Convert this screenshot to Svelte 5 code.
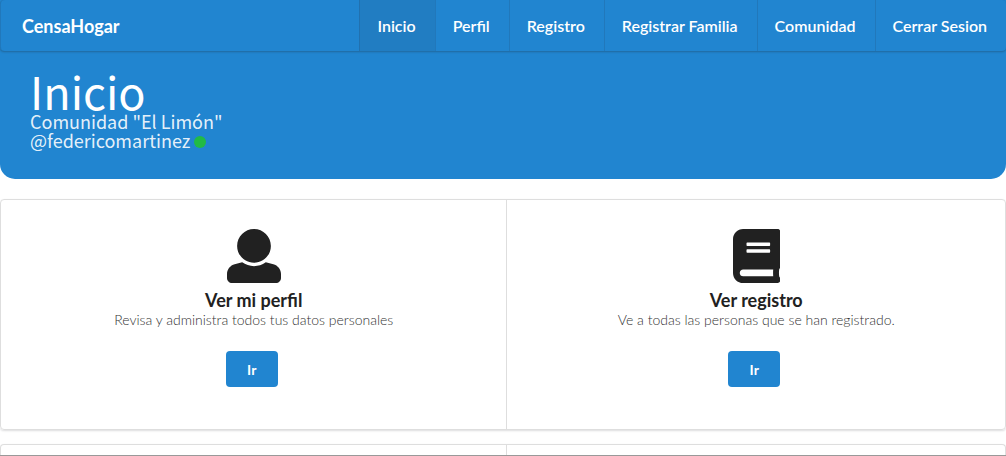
<script>
  const links = ['Inicio', 'Perfil', 'Registro', 'Registrar Familia', 'Comunidad', 'Cerrar Sesion'];
  const cards = [
    {
      title: 'Ver mi perfil',
      text: 'Revisa y administra todos tus datos personales',
      box: '0 0 512 512',
      path: 'M256 0c88.366 0 160 71.634 160 160s-71.634 160-160 160S96 248.366 96 160 167.634 0 256 0zm183.283 333.821l-71.313-17.828c-74.923 53.89-165.738 41.864-223.94 0l-71.313 17.828C29.981 344.505 0 382.903 0 426.955V464c0 26.51 21.49 48 48 48h416c26.51 0 48-21.49 48-48v-37.045c0-44.052-29.981-82.45-72.717-93.134z'
    },
    {
      title: 'Ver registro',
      text: 'Ve a todas las personas que se han registrado.',
      box: '0 0 448 512',
      path: 'M448 360V24c0-13.3-10.7-24-24-24H96C43 0 0 43 0 96v320c0 53 43 96 96 96h328c13.3 0 24-10.7 24-24v-16c0-7.5-3.5-14.3-8.9-18.7-4.2-15.4-4.2-59.3 0-74.7 5.4-4.3 8.9-11.1 8.9-18.6zM128 134c0-3.3 2.7-6 6-6h212c3.3 0 6 2.7 6 6v20c0 3.3-2.7 6-6 6H134c-3.3 0-6-2.7-6-6v-20zm0 64c0-3.3 2.7-6 6-6h212c3.3 0 6 2.7 6 6v20c0 3.3-2.7 6-6 6H134c-3.3 0-6-2.7-6-6v-20zm253.4 250H96c-17.7 0-32-14.3-32-32 0-17.6 14.4-32 32-32h285.4c-1.9 17.1-1.9 46.9 0 64z'
    }
  ];
</script>

<div class="page">
  <header class="banner">
    <nav class="menu">
      <a class="brand" href="#inicio">CensaHogar</a>
      <div class="links">
        {#each links as link, i}
          <a class="item" class:active={i === 0} href="#{link}">{link}</a>
        {/each}
      </div>
    </nav>
    <div class="intro">
      <h1>Inicio</h1>
      <p>Comunidad "El Limón"</p>
      <p>@federicomartinez <span class="dot"></span></p>
    </div>
  </header>

  <main>
    <section class="segment">
      {#each cards as card}
        <article class="cell">
          <svg class="icon" viewBox={card.box} aria-hidden="true"><path d={card.path} /></svg>
          <h2>{card.title}</h2>
          <p>{card.text}</p>
          <button type="button">Ir</button>
        </article>
      {/each}
    </section>
    <section class="segment next">
      <div class="cell"></div>
      <div class="cell"></div>
    </section>
  </main>
</div>

<style>
  :global(body) {
    background: #fff;
    font-family: Lato, sans-serif;
  }
  .page {
    box-sizing: border-box;
    height: 100vh;
    overflow: hidden;
    display: flex;
    flex-direction: column;
    border-bottom: 1px solid #999;
  }
  .banner {
    background: #2185d0;
    color: #fff;
    border-radius: 0 0 15px 15px;
    padding-bottom: 29px;
  }
  .menu {
    display: flex;
    justify-content: space-between;
    height: 51px;
    border-radius: 4px;
    box-shadow: inset 1px 0 rgba(34, 36, 38, 0.12), 0 1px 2px rgba(34, 36, 38, 0.3);
  }
  .menu a {
    display: flex;
    align-items: center;
    color: #fff;
    text-decoration: none;
  }
  .menu .brand {
    padding-left: 22px;
    font-size: 18px;
    font-weight: 700;
  }
  .links {
    display: flex;
  }
  .menu .item {
    padding-left: 17px;
    padding-right: 19px;
    font-size: 16px;
    font-weight: 600;
    border-left: 1px solid rgba(34, 36, 38, 0.12);
  }
  .menu .active {
    background: rgba(34, 36, 38, 0.08);
  }
  .intro {
    padding: 20px 30px 0;
    font-family: "Noto Sans CJK SC", sans-serif;
  }
  h1 {
    margin: 0 0 2px;
    font-size: 45px;
    line-height: 39px;
    font-weight: 400;
  }
  .intro p {
    margin: 0;
    font-size: 18px;
    line-height: 19px;
    font-weight: 400;
    color: rgba(255, 255, 255, 0.9);
  }
  .dot {
    display: inline-block;
    width: 12px;
    height: 12px;
    border-radius: 50%;
    background: #21ba45;
  }
  main {
    flex: 1;
    display: flex;
    flex-direction: column;
    gap: 14px;
    padding-top: 20px;
  }
  .segment {
    display: grid;
    grid-template-columns: 506fr 499fr;
    border: 1px solid #dedede;
    border-radius: 4px;
    box-shadow: 0 1px 2px rgba(34, 36, 38, 0.15);
  }
  .next {
    flex: 1;
    border-bottom: 0;
    border-radius: 4px 4px 0 0;
  }
  .cell {
    display: flex;
    flex-direction: column;
    align-items: center;
    text-align: center;
  }
  article {
    padding: 29px 14px 42px;
  }
  .cell + .cell {
    border-left: 1px solid #dedede;
  }
  .icon {
    height: 54px;
    fill: #212121;
  }
  h2 {
    margin: 6px 0 0;
    font-size: 18px;
    line-height: 22px;
    font-weight: 700;
    color: #212121;
  }
  article p {
    margin: 0;
    font-size: 14px;
    line-height: 18px;
    font-weight: 300;
    color: #333;
  }
  button {
    margin: 22px 4px 0 0;
    width: 52px;
    height: 36px;
    border: 0;
    border-radius: 4px;
    background: #2185d0;
    color: #fff;
    font: 700 14px Lato, sans-serif;
  }
</style>
